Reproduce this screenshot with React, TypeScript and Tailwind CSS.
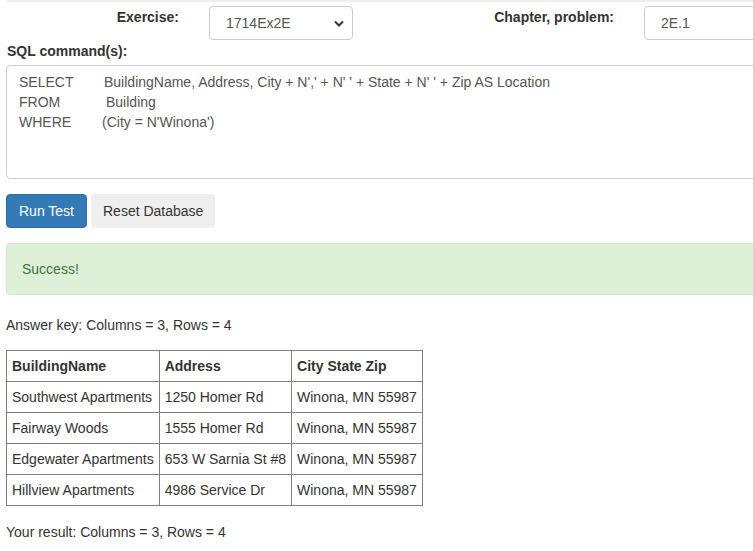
import React from "react";

const rows = [
  ["Southwest Apartments", "1250 Homer Rd", "Winona, MN 55987"],
  ["Fairway Woods", "1555 Homer Rd", "Winona, MN 55987"],
  ["Edgewater Apartments", "653 W Sarnia St #8", "Winona, MN 55987"],
  ["Hillview Apartments", "4986 Service Dr", "Winona, MN 55987"],
];

export default function App() {
  return (
    <div
      className="w-[753px] h-[551px] overflow-hidden bg-white text-[14px] leading-5 text-[#333]"
      style={{ fontFamily: '"Liberation Sans", Arial, sans-serif' }}
    >
      <div className="ml-[7px] h-[2px] bg-[#eeeeee] rounded-bl-[4px]" />
      <div className="flex items-start mt-[4px] whitespace-nowrap">
        <div className="w-[179px] shrink-0 text-right font-bold pt-[1px]">Exercise:</div>
        <div className="ml-[30px] w-[144px] shrink-0 h-[34px] border border-[#ccc] rounded-[4px] flex items-center justify-between pl-[16px] pr-[8px] text-[#555]">
          <span>1714Ex2E</span>
          <svg width="10" height="7" viewBox="0 0 10 7">
            <path d="M1 1.5 L5 5.5 L9 1.5" fill="none" stroke="#333" strokeWidth="2" />
          </svg>
        </div>
        <div className="w-[261px] shrink-0 text-right font-bold pt-[1px]">Chapter, problem:</div>
        <div className="ml-[30px] w-[140px] shrink-0 h-[34px] border border-[#ccc] rounded-[4px] flex items-center pl-[16px] text-[#555]">
          2E.1
        </div>
      </div>
      <div className="px-[6px]">
        <div className="font-bold mt-[1px] ml-[1px]">SQL command(s):</div>
        <div className="mt-[4px] w-[760px] h-[114px] border border-[#ccc] rounded-[4px] pl-[12px] pt-[6px] text-[#555] whitespace-nowrap">
          <div>
            <span className="inline-block w-[85px]">SELECT</span>
            BuildingName, Address, City + N',' + N' ' + State + N' ' + Zip AS Location
          </div>
          <div>
            <span className="inline-block w-[87px]">FROM</span>
            Building
          </div>
          <div>
            <span className="inline-block w-[83px]">WHERE</span>
            (City = N'Winona')
          </div>
        </div>
        <div className="flex gap-[4px] mt-[15px]">
          <div className="h-[34px] px-[12px] flex items-center rounded-[4px] bg-[#337ab7] border border-[#2e6da4] text-white">
            Run Test
          </div>
          <div className="h-[34px] px-[12px] flex items-center rounded-[4px] bg-[#efefef] text-[#333]">
            Reset Database
          </div>
        </div>
        <div className="mt-[15px] w-[760px] h-[52px] border border-[#d6e9c6] bg-[#dff0d8] rounded-[4px] px-[15px] flex items-center text-[#3c763d]">
          Success!
        </div>
        <div className="mt-[20px]">Answer key: Columns = 3, Rows = 4</div>
        <table className="mt-[15px] border-collapse whitespace-nowrap">
          <thead>
            <tr>
              <th className="border border-[#808080] px-[5px] py-[5px] text-left font-bold">BuildingName</th>
              <th className="border border-[#808080] px-[5px] py-[5px] text-left font-bold">Address</th>
              <th className="border border-[#808080] px-[5px] py-[5px] text-left font-bold">City State Zip</th>
            </tr>
          </thead>
          <tbody>
            {rows.map((r) => (
              <tr key={r[0]}>
                {r.map((c, i) => (
                  <td key={i} className="border border-[#808080] px-[5px] py-[5px]">
                    {c}
                  </td>
                ))}
              </tr>
            ))}
          </tbody>
        </table>
        <div className="mt-[16px]">Your result: Columns = 3, Rows = 4</div>
      </div>
    </div>
  );
}
